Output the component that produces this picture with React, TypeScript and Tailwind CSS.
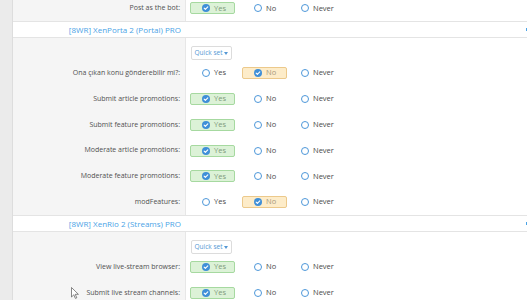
type Choice = "yes" | "no" | "never";

const font = { fontFamily: '"Open Sans", "Noto Sans", sans-serif' };

function Radio({ checked }: { checked: boolean }) {
  if (checked) {
    return (
      <svg width="8" height="8" viewBox="0 0 16 16" className="shrink-0">
        <circle cx="8" cy="8" r="8" fill="#3f8fd8" />
        <path d="M4.3 8.3l2.4 2.3 4.9-5" fill="none" stroke="#fff" strokeWidth="2.2" strokeLinecap="round" strokeLinejoin="round" />
      </svg>
    );
  }
  return (
    <span className="block h-[8px] w-[8px] shrink-0 rounded-full border-[1.3px] border-[#4d97d9] bg-white" />
  );
}

function Option({ label, value, selected, className }: { label: string; value: Choice; selected: boolean; className: string }) {
  let box = "border border-transparent";
  if (selected && value === "yes") box = "border border-[#a6d9a0] bg-[#dcf2d7] text-[#7f9a7c]";
  if (selected && value === "no") box = "border border-[#ecc98b] bg-[#fdecc9] text-[#a89a80]";
  return (
    <div className={`flex h-[12px] w-[45px] items-center gap-[4px] rounded-[2px] pl-[11px] ${box} ${className}`}>
      <Radio checked={selected} />
      <span className={`text-[7.5px] leading-none ${selected ? "" : "text-[#4b4b4b]"}`}>{label}</span>
    </div>
  );
}

function Row({ label, value }: { label: string; value: Choice }) {
  return (
    <div className="flex h-[25.8px]">
      <div className="flex w-[173px] shrink-0 items-center justify-end border-r border-[#e7e7e7] bg-[#f5f5f5] pr-[5px] text-[7px] text-[#505050]">
        {label}
      </div>
      <div className="flex flex-1 items-center bg-white pl-[4px]">
        <Option label="Yes" value="yes" selected={value === "yes"} className="mr-[7px]" />
        <Option label="No" value="no" selected={value === "no"} className="mr-[2px]" />
        <Option label="Never" value="never" selected={value === "never"} className="" />
      </div>
    </div>
  );
}

function Header({ title }: { title: string }) {
  return (
    <div className="flex h-[17px] items-center border-y border-[#e4e4e4] bg-white">
      <div className="w-[173px] shrink-0 pr-[5px] text-right text-[8px] text-[#4aa3e6]">{title}</div>
      <div className="flex-1" />
      <div className="h-[3px] w-[1px] bg-[#4aa3e6]" />
    </div>
  );
}

function QuickSet() {
  return (
    <div className="flex h-[22px]">
      <div className="w-[173px] shrink-0 border-r border-[#e7e7e7] bg-[#f5f5f5]" />
      <div className="flex-1 bg-white pl-[5px] pt-[8px]">
        <div className="flex h-[14px] w-[41px] items-center justify-center gap-[2px] rounded-[2px] border border-[#dcdcdc] bg-white text-[6.5px] text-[#5598d4]">
          Quick set
          <svg width="4" height="3" viewBox="0 0 4 3">
            <path d="M0 0h4L2 3z" fill="#5598d4" />
          </svg>
        </div>
      </div>
    </div>
  );
}

const portal: [string, Choice][] = [
  ["Ona çıkan konu gönderebilir mi?:", "no"],
  ["Submit article promotions:", "yes"],
  ["Submit feature promotions:", "yes"],
  ["Moderate article promotions:", "yes"],
  ["Moderate feature promotions:", "yes"],
  ["modFeatures:", "no"],
];

const streams: [string, Choice][] = [
  ["View live-stream browser:", "yes"],
  ["Submit live stream channels:", "yes"],
];

export default function App() {
  return (
    <div className="relative flex h-[300px] overflow-hidden bg-[#ebebeb]" style={font}>
      <div className="w-[13px] shrink-0 border-r border-[#dddddd]" />
      <div className="-mt-[4.5px] flex-1">
        <Row label="Post as the bot:" value="yes" />
        <Header title="[8WR] XenPorta 2 (Portal) PRO" />
        <QuickSet />
        {portal.map(([label, value]) => (
          <Row key={label} label={label} value={value} />
        ))}
        <Header title="[8WR] XenRio 2 (Streams) PRO" />
        <QuickSet />
        {streams.map(([label, value]) => (
          <Row key={label} label={label} value={value} />
        ))}
      </div>
      <svg width="8" height="12" viewBox="0 0 8 12" className="absolute left-[71px] top-[287px]">
        <path d="M0.5 0.5v9.5l2.3-2.2 1.6 3.6 1.4-0.6-1.6-3.5h3.2z" fill="#fff" stroke="#555" strokeWidth="0.7" strokeLinejoin="round" />
      </svg>
    </div>
  );
}
